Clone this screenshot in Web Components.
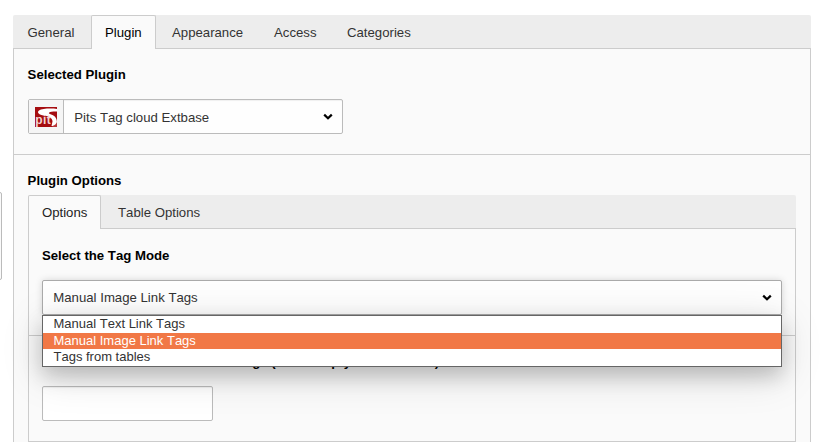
<!DOCTYPE html>
<html lang="en">
<head>
<meta charset="utf-8">
<title>Plugin</title>
<style>
html,body{margin:0;height:442px;overflow:hidden;background:#fff}
body{position:relative;font:13.2px/20px "Liberation Sans",Arial,sans-serif;font-kerning:none;color:#333}
.edge{position:absolute;left:-11px;top:192px;width:11px;height:86px;border:1px solid #bbb;border-radius:2px;background:#fafafa}
body>tab-panel{padding:15px 12px 0 13px;height:442px}
</style>
</head>
<body>
<div class="edge"></div>
<tab-panel outer tabs="General,Plugin,Appearance,Access,Categories" widths="77,65,101,72,98" active="1">
  <form-section label="Selected Plugin" style="height:105px">
    <select-field text="Pits Tag cloud Extbase" icon style="width:315px"></select-field>
  </form-section>
  <form-section class="ruled" label="Plugin Options" style="--gap:4px">
    <tab-panel tabs="Options,Table Options" widths="73,115" active="0" style="height:247px;--lead:16px;--indent:-.1px">
      <form-section label="Select the Tag Mode" style="height:106px;--pad:13px;--gap:14px;--top:17px">
        <select-field text="Manual Image Link Tags" open></select-field>
      </form-section>
      <form-section class="ruled" label="Number of links shown on an image (leave empty for unlimited)" style="--pad:13px;--gap:14px">
        <text-input></text-input>
      </form-section>
    </tab-panel>
  </form-section>
</tab-panel>
<script>
class TabPanel extends HTMLElement{
  connectedCallback(){
    const names=this.getAttribute('tabs').split(',');
    const widths=this.getAttribute('widths').split(',');
    const active=+this.getAttribute('active');
    this.attachShadow({mode:'open'}).innerHTML=`<style>
      :host{display:flex;flex-direction:column;box-sizing:border-box}
      nav{display:flex;gap:1px;height:34px;flex:none;background:#ededed;border-radius:2px 2px 0 0;box-shadow:inset 0 -1px #ccc}
      span{box-sizing:border-box;height:34px;line-height:35px;padding-left:var(--lead,15px);white-space:nowrap}
      span:first-child{padding-left:14.5px}
      span.on{border:1px solid #ccc;border-bottom:0;border-radius:2px 2px 0 0;background:#fafafa;color:#000;line-height:33px;padding-left:13px}
      .on:first-child{color:#222;padding-left:12.9px}
      main{flex:1;min-height:0;border:1px solid #ccc;border-top:0;background:#fafafa}
      :host([outer]) main{border-bottom:0}
    </style><nav>${names.map((n,i)=>`<span style="width:${widths[i]}px" class="${i===active?'on':''}">${n}</span>`).join('')}</nav><main><slot></slot></main>`;
  }
}
class FormSection extends HTMLElement{
  connectedCallback(){
    this.attachShadow({mode:'open'}).innerHTML=`<style>
      :host{display:block;box-sizing:border-box;padding:var(--top,16px) var(--pad,14px) 0}
      :host(.ruled){border-top:1px solid #ccc}
      b{display:block;height:20px;line-height:20px;margin-bottom:var(--gap,14px);color:#000;white-space:nowrap;text-indent:var(--indent,-.4px)}
    </style><b>${this.getAttribute('label')}</b><slot></slot>`;
  }
}
class SelectField extends HTMLElement{
  connectedCallback(){
    const icon=this.hasAttribute('icon')?`<div class="icon"><svg width="22" height="20" viewBox="0 0 22 20"><rect width="22" height="20" fill="#a50d10"/><path d="M22 2C16 1 7 1.500 4 3.500 1.500 5.500 4 7.800 9 8.500 14 9.200 17.500 11 17.500 14.500L16.500 19H22V16C22 10 19 8.500 15.500 7.300 12 6 14 4.300 22 4.500z" fill="#fff"/><path d="M17.500 19C20 18 21 17 22 15v5h-5z" fill="#b8383a"/><text x="0.200" y="17.300" textLength="15.500" font-family="Liberation Sans" font-weight="bold" font-size="12" fill="#f3d3d3">pit</text></svg></div>`:'';
    const menu=this.hasAttribute('open')?'<option-menu></option-menu>':'';
    this.attachShadow({mode:'open'}).innerHTML=`<style>
      :host{display:flex;position:relative;box-sizing:border-box;height:35px;border:1px solid #bbb;border-radius:2px;background:#fefefe;box-shadow:inset 0 1px 1px rgba(0,0,0,.06)}
      :host([open]){border-color:#aaa;box-shadow:0 0 7px rgba(0,0,0,.15)}
      .icon{width:34px;border-right:1px solid #bbb;background:#f5f5f5;display:flex;align-items:center;justify-content:center}
      span{flex:1;padding-left:10.3px;line-height:35px}
      :host([open]) span{line-height:33px}
      .arrow{margin:13px 9px 0 0;flex:none}
      option-menu{position:absolute;left:-1px;right:-1px;top:34px}
    </style>${icon}<span>${this.getAttribute('text')}</span><svg class="arrow" width="10" height="8" viewBox="0 0 10 8"><path d="M1.200 1.600 5 5.300 8.800 1.600" fill="none" stroke="#000" stroke-width="2.200"/></svg>${menu}`;
  }
}
class OptionMenu extends HTMLElement{
  connectedCallback(){
    this.attachShadow({mode:'open'}).innerHTML=`<style>
      :host{display:block;box-sizing:border-box;height:52px;border:1px solid #666;background:#fff;font-size:13px;box-shadow:0 9px 20px rgba(0,0,0,.18),0 8px 42px rgba(0,0,0,.15);z-index:2}
      div{height:17px;line-height:15px;padding-left:10.5px;color:#333}
      .sel{height:16px;line-height:16px;background:#f17846;color:#fff}
    </style><div>Manual Text Link Tags</div><div class="sel">Manual Image Link Tags</div><div>Tags from tables</div>`;
  }
}
class TextInput extends HTMLElement{
  connectedCallback(){
    this.attachShadow({mode:'open'}).innerHTML=`<style>
      :host{display:block;box-sizing:border-box;width:171px;height:35px;border:1px solid #bbb;border-radius:2px;background:#fff;box-shadow:inset 0 1px 1px rgba(0,0,0,.06)}
    </style>`;
  }
}
customElements.define('tab-panel',TabPanel);
customElements.define('form-section',FormSection);
customElements.define('option-menu',OptionMenu);
customElements.define('select-field',SelectField);
customElements.define('text-input',TextInput);
</script>
</body>
</html>
